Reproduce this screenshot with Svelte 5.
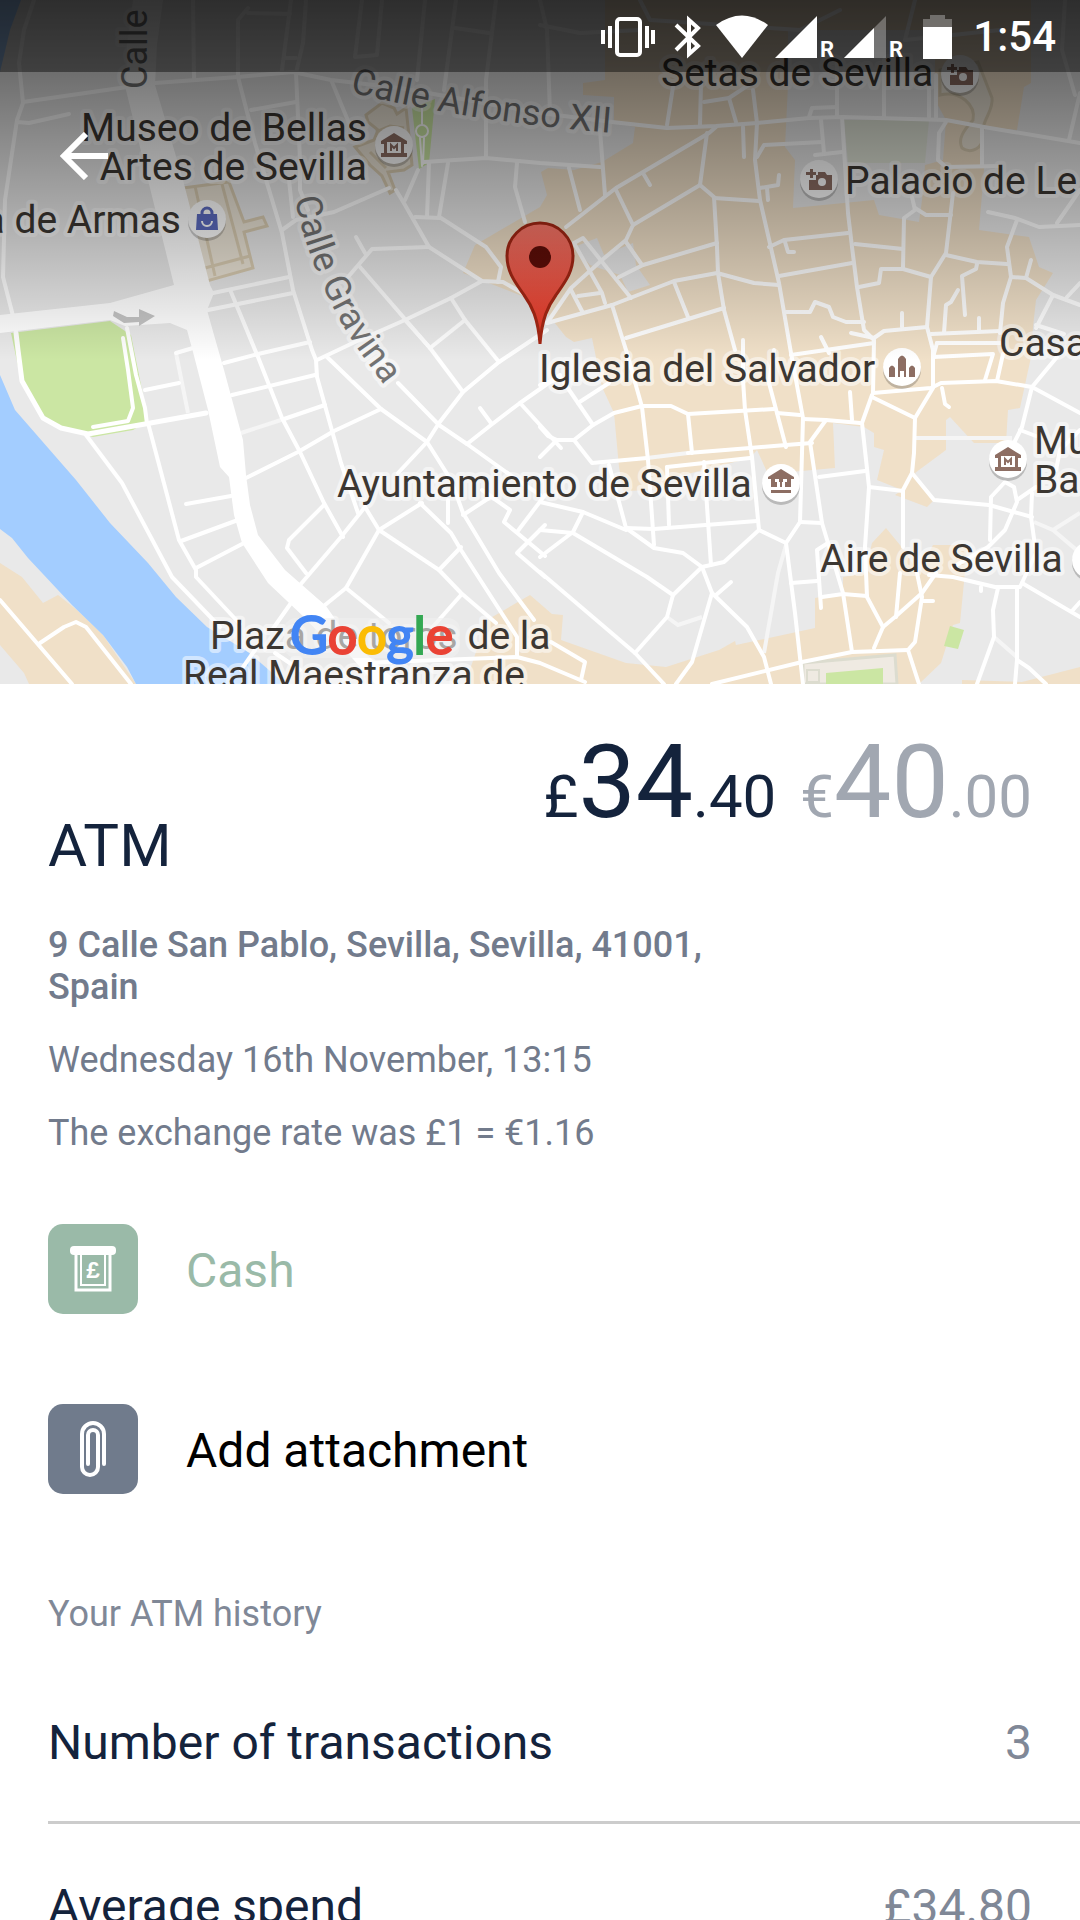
<script lang="ts">
  // Street lines on the map, as polyline points
  const streets: string[] = [
    '34,0 24,30 19,63 23,103 17,120 5,200 3,277 13,316',
    '23,102 127,87',
    '155,83 196,80 238,77 293,72 331,80 400,88 540,113 612,122 667,128 716,126 757,123 809,118 843,117 946,120 984,127 1080,143',
    '17,122 29,123 69,114',
    '193,0 194,78',
    '248,8 238,20 238,77 255,143 282,233 293,290 312,350 316,360 317,377 341,463 358,513',
    '248,13 290,14',
    '291,0 282,70',
    '306,0 303,43 296,73 300,160 300,190 308,210',
    '286,58 296,58',
    '289,180 293,217',
    '362,0 355,57 377,55 382,0',
    '425,0 417,80',
    '456,0 444,90',
    '496,0 486,80 486,158',
    '455,28 489,33',
    '251,110 296,102',
    '332,82 356,140',
    '389,188 334,212 296,220 282,230',
    '396,190 405,205 429,247 482,281 503,282 540,303',
    '429,247 372,249 348,277',
    '356,237 365,253',
    '418,170 405,200',
    '429,163 427,217',
    '448,163 439,217',
    '415,217 441,218 486,247 501,267 498,282',
    '424,162 486,158 540,163 600,167',
    '517,163 515,187 525,222',
    '213,293 289,277',
    '208,310 293,293',
    '231,292 258,357 282,418 300,452 324,503 343,537',
    '360,267 430,348 463,392',
    '451,298 465,320 499,362',
    '465,320 430,348',
    '405,320 430,348',
    '482,281 451,298 405,320 355,342 317,360',
    '224,363 258,354 310,342',
    '232,395 315,375',
    '284,419 325,405',
    '246,478 298,452 334,431 381,409',
    '145,390 179,383',
    '176,353 193,348',
    '186,504 231,496',
    '181,541 238,520',
    '196,568 244,543',
    '148,423 179,540 196,570 196,577 240,624',
    '86,435 122,483 172,577 220,627',
    '327,357 381,409 427,442 451,480 463,513 499,573 534,620',
    '398,383 439,425 467,444 506,472 540,495',
    '547,330 499,362 463,392 439,423 427,442 398,473',
    '560,375 520,403 491,425 467,444',
    '480,408 491,423',
    '520,403 561,448',
    '420,503 451,533 461,550 517,637 517,657',
    '448,500 448,523',
    '463,515 489,498',
    '482,490 510,510 504,522 545,556',
    '545,495 517,532',
    '545,525 517,553 545,577',
    '365,507 379,530 439,570 461,593 496,623',
    '422,503 379,530 346,588 325,605',
    '365,507 341,537 300,585',
    '324,505 289,540 287,548 306,573',
    '439,570 461,547',
    '461,595 430,630',
    '346,588 389,623',
    '300,587 324,607 331,630',
    '291,603 272,630',
    '255,650 241,670',
    '275,653 300,670',
    '362,663 517,657 540,663 585,682',
    '551,642 585,662 581,680',
    '0,600 72,684',
    '40,643 64,627 76,622 86,627 131,684',
    '547,323 571,288 602,260 626,240 633,225 616,190',
    '566,227 616,188 709,133 716,127',
    '569,168 580,210',
    '600,130 605,195',
    '633,225 700,185 714,197 717,247 718,273 724,310 735,350',
    '707,133 700,185',
    '714,198 759,201',
    '753,90 757,123 755,160 760,200 779,283 791,353 803,418 800,522 786,543',
    '626,242 642,265',
    '717,243 643,265 619,277',
    '574,243 583,238 631,298',
    '574,243 602,293 605,303',
    '571,290 583,313',
    '578,296 600,293',
    '547,323 612,305 674,281 717,273 754,283 779,285',
    '674,282 688,317',
    '626,338 724,308',
    '612,305 626,350 642,407 648,460 654,545',
    '769,247 784,240 848,233',
    '785,242 788,252 794,252',
    '779,276 852,263',
    '842,117 848,213 852,247 857,287 864,330 874,340 873,393',
    '855,244 903,249',
    '859,287 879,283 881,269 903,269 931,277',
    '903,268 904,218 915,210 912,197',
    '915,208 926,215 951,215',
    '953,193 946,253 931,277 927,327 933,350 933,388 915,418',
    '946,255 977,262 1007,264',
    '977,264 976,269 962,276 965,315',
    '958,290 951,302 946,305 944,333',
    '1017,220 1007,247 1011,277 1003,303 1000,333',
    '988,212 1015,218 1039,227 1080,225',
    '1011,277 1026,278 1053,295 1080,305',
    '1031,260 1026,278',
    '1053,295 1036,328',
    '1067,297 1080,283',
    '1036,325 1064,334',
    '786,312 810,312 815,302 829,307 833,317 846,322 864,322',
    '851,333 874,338 884,331 927,327',
    '902,313 902,327',
    '979,318 979,330',
    '931,334 1000,331',
    '937,343 1000,343',
    '937,343 933,357 993,354 985,380',
    '1003,354 997,381',
    '821,337 829,353',
    '673,87 667,125',
    '701,83 700,125',
    '704,102 729,98 750,84',
    '729,98 736,122',
    '743,127 744,157',
    '757,157 764,145 822,142',
    '821,120 824,153',
    '815,155 842,152',
    '809,117 812,108 837,107',
    '837,60 837,117',
    '884,60 884,117',
    '929,80 929,117',
    '936,75 936,117',
    '760,188 778,185 779,175',
    '767,188 768,200',
    '643,173 650,185',
    '946,122 939,133 938,160 946,167 1000,166',
    '982,127 982,165',
    '1080,93 1069,140',
    '1080,190 1057,223',
    '540,0 547,30 550,113',
    '540,25 580,33 640,30',
    '640,0 650,20 800,30 840,10',
    '915,0 905,40 1000,30',
    '1065,0 1062,50 1075,95',
    '540,457 557,440 574,440 593,425 614,413 642,406 671,406 688,414 774,409',
    '540,427 548,436 557,440',
    '574,440 592,463 647,458',
    '688,453 750,448 786,445 812,443',
    '688,414 692,453',
    '540,385 561,378 593,425',
    '578,403 609,383',
    '743,340 743,380 745,410 752,457 759,530 786,543 795,613 803,684',
    '759,530 724,562 702,567',
    '667,467 750,458',
    '609,465 626,528 654,548 683,553 702,567 712,593 747,627 764,657 771,684',
    '540,502 583,512 626,530',
    '583,512 573,532 540,557',
    '540,530 573,533 647,577 673,595',
    '702,567 673,595 667,617 635,653',
    '540,572 635,653 664,684',
    '712,593 692,662 676,684',
    '716,595 731,582',
    '626,528 654,529 757,521',
    '667,467 669,525',
    '704,462 711,565',
    '774,350 769,383 786,447',
    '777,413 800,415',
    '803,419 826,420 860,423',
    '826,420 810,442 822,523 843,593 852,652',
    '800,522 822,523',
    '873,393 931,388 941,383 996,381 1032,387 1080,413',
    '872,395 862,423 869,487 865,547 867,597 883,627',
    '872,397 915,418 914,453 912,473 903,490 903,547',
    '819,477 865,471',
    '869,487 903,491',
    '912,473 934,500 989,505 1032,517',
    '1057,357 1032,387 1022,427 1012,447',
    '1020,430 1036,436',
    '1005,482 991,497 990,540',
    '1005,482 1014,487 1017,502 1005,530 988,547 953,567',
    '1017,500 1036,487',
    '1032,493 1031,517 1036,553 1020,587',
    '929,575 953,577 995,587 1019,587',
    '1022,583 1080,617',
    '1072,611 1080,602',
    '1017,587 1017,660 1015,684',
    '1017,660 1029,668 1046,684',
    '998,588 993,610 994,637 977,684',
    '981,587 981,591',
    '936,573 922,593 895,617 883,627 874,648',
    '917,573 922,597 915,642 908,650 919,684',
    '922,601 933,601',
    '712,684 802,662 852,652 908,650',
    '822,597 843,594 867,596',
    '828,543 817,550 821,608',
    '791,583 817,581',
    '900,573 896,617',
    '850,392 852,420',
    '791,355 874,343',
    '942,388 945,404 949,407',
    '1080,430 1060,450 1056,470'
  ];

  const footpaths: string[] = [
    '176,353 188,413',
    '241,433 284,419',
    '647,458 688,453',
    '915,438 1012,438',
    '1034,522 1053,530 1080,513',
    '1053,530 1080,553',
    '994,637 1018,658',
    '786,545 778,573 764,653',
    '667,617 678,625 702,617'
  ];

  type Place = { name: string; x: number; y: number; end?: boolean };

  const places: Place[] = [
    { name: 'Museo de Bellas', x: 367, y: 141, end: true },
    { name: 'Artes de Sevilla', x: 367, y: 180, end: true },
    { name: 'a de Armas', x: 181, y: 233, end: true },
    { name: 'Setas de Sevilla', x: 661, y: 86 },
    { name: 'Palacio de Le', x: 845, y: 194 },
    { name: 'Iglesia del Salvador', x: 539, y: 382 },
    { name: 'Ayuntamiento de Sevilla', x: 337, y: 497 },
    { name: 'Aire de Sevilla', x: 820, y: 572 },
    { name: 'Casa', x: 999, y: 356 },
    { name: 'Mu', x: 1034, y: 454 },
    { name: 'Ba', x: 1034, y: 493 },
    { name: 'Plaza de toros de la', x: 210, y: 649 },
    { name: 'Real Maestranza de', x: 183, y: 688 }
  ];

  const pois = [
    { kind: 'museum', x: 394, y: 145 },
    { kind: 'shop', x: 207, y: 219 },
    { kind: 'camera', x: 960, y: 74 },
    { kind: 'camera', x: 819, y: 179 },
    { kind: 'church', x: 902, y: 367 },
    { kind: 'hall', x: 781, y: 483 },
    { kind: 'museum', x: 1008, y: 459 },
    { kind: 'none', x: 1091, y: 560 }
  ];

  const history = [
    { label: 'Number of transactions', value: '3' },
    { label: 'Average spend', value: '£34.80' }
  ];
</script>

<div class="screen">
  <section class="map">
    <svg class="map-canvas" viewBox="0 0 1080 684" preserveAspectRatio="xMidYMid slice" role="img" aria-label="Map of Sevilla">
      <defs>
        <linearGradient id="scrim" x1="0" y1="0" x2="0" y2="1">
          <stop offset="0" stop-color="#000" stop-opacity="0.66" />
          <stop offset="1" stop-color="#000" stop-opacity="0" />
        </linearGradient>
        <linearGradient id="pin" x1="0" y1="0" x2="0" y2="1">
          <stop offset="0" stop-color="#ff7a6c" />
          <stop offset="1" stop-color="#e0301e" />
        </linearGradient>
        <path id="gravina" d="M295 198 C302 236 314 268 332 305 S368 362 394 399" />
        <path id="alfonso" d="M350 92 Q470 122 625 134" />
      </defs>

      <rect width="1080" height="684" fill="#e9e9e9" />

      <!-- built-up areas -->
      <g fill="#f0e0c8">
        <path d="M605 0V80L583 83V95L614 97V122L635 127L633 143L602 162L574 170L548 168L541 172L547 195L540 207L475 245L463 273L540 303L554 322L566 337L574 342L592 338L602 387L614 413L619 467L623 491L660 490L672 478L750 458L757 450L768 474L835 468L833 423L864 427L874 433V447L884 450L877 480L902 490L895 495L927 507L934 500L919 480L915 473L946 450V420L950 417L974 443L1006 443L1008 410L1020 408L1031 357L1033 327L1036 300L1053 273L1039 267L1029 237L979 230L984 170V127L1017 130L1024 87L1031 83V0Z" />
        <path d="M487 620L530 595L552 614L563 615L561 640L626 663L666 667L719 650L735 641L736 645L815 628V598L843 593V577L865 573L872 543L886 528L900 545L919 573L933 545H967L964 582L960 623L953 625L941 663L919 684H465Z" />
        <path d="M962 680L1022 682L1080 667V684H962Z" />
        <path d="M0 563L22 577L43 603L58 595L77 610L103 635L136 684H29L24 673L0 645Z" />
      </g>
      <g fill="#e9e9e9">
        <path d="M788 30V85L785 147L795 160L793 208L874 200L879 215L919 222L922 200L925 165L943 160L946 120L935 100V30Z" />
        <path d="M574 247L597 238L604 255L633 243L636 265L650 285L628 292L620 275L590 265Z" />
      </g>
      <path d="M844 120H929L925 163H848Z" fill="#dfe3d6" />

      <!-- river -->
      <g fill="#a3cdff">
        <path d="M0 0H21L10 30L0 72Z" />
        <path d="M0 375L15 410L76 480L110 523L148 563L176 597L207 627L248 652L262 664L285 684H136L127 667L103 635L72 605L28 558L12 538L0 529Z" />
      </g>

      <!-- parks -->
      <g fill="#cbe6a3">
        <path d="M11 333L110 321L131 335L138 370L146 410L145 423L133 430L93 437L62 428L45 418L21 380Z" />
        <path d="M412 108L435 99L429 163L419 169Z" />
        <path d="M950 626L964 630L958 649L944 646Z" />
      </g>

      <!-- landmark buildings -->
      <g fill="#ebe4d6" stroke="#d9ccb2" stroke-width="3">
        <path d="M183 188L229 182L244 222L263 217L267 226L244 232L253 268L207 281L195 240Z" />
        <path d="M195 186L215 276M222 184L243 264M205 268L250 256" fill="none" />
        <path d="M366 115L382 103L394 108L397 114L406 108L410 145L412 165L404 170L388 172L395 190L390 193L382 176L370 165L355 147L366 143L374 140L378 130L368 122Z" />
        <path d="M370 152L386 168M376 132L390 126L404 128" fill="none" />
        <path d="M940 95C960 90 976 105 973 120C962 132 958 140 962 148A13 13 0 0 0 982 142C980 120 994 112 992 98L978 62L940 70Z" />
      </g>
      <path d="M803 663L895 655L897 684H803Z" fill="#efeae2" stroke="#dcdccf" stroke-width="3" />
      <path d="M826 673L883 668V684H826Z" fill="#cbe6a3" />
      <rect x="807" y="670" width="12" height="12" fill="none" stroke="#dcdccf" stroke-width="2" />

      <!-- streets -->
      <g fill="none" stroke="#f5f5f5" stroke-width="4">
        {#each footpaths as points}
          <polyline {points} />
        {/each}
      </g>
      <g fill="none" stroke="#fff" stroke-width="4" stroke-linecap="round" stroke-linejoin="round">
        {#each streets as points}
          <polyline {points} />
        {/each}
        <path d="M16 333L18 350L22 381L43 418L61 428L88 434L145 424L206 413" stroke-width="5" />
        <path d="M123 338L128 370L133 408L128 421L93 427" />
        <path d="M127 328L136 375L145 408L147 424" />
        <path d="M422 108V124M420 138L422 166M424 138L423 164" stroke-width="2" />
        <circle cx="422" cy="131" r="6" stroke-width="2" />
      </g>
      <path
        fill="#fff"
        d="M133 0L127 45L126 90L148 180L174 285L110 303L0 315V333L110 320L125 326L170 323L187 330L193 352L208 410L220 467L229 477L234 515L242 543L268 583L305 618L320 634L345 650L375 684L400 684L350 640L326 606L285 570L258 535L250 505L246 475L243 440L224 370L214 335L207 310L214 293L210 285L183 180L155 85L157 45L163 0Z"
      />
      <path d="M114 311L127 317H139V309L155 316L139 326V322L124 323L113 316Z" fill="#c4c4c4" />

      <!-- street names -->
      <g class="street-name">
        <text transform="translate(147 89) rotate(-90)">Calle</text>
        <text><textPath href="#alfonso">Calle Alfonso XII</textPath></text>
        <text><textPath href="#gravina">Calle Gravina</textPath></text>
      </g>

      <!-- places -->
      <g class="place-name">
        {#each places as place}
          <text x={place.x} y={place.y} text-anchor={place.end ? 'end' : 'start'}>{place.name}</text>
        {/each}
      </g>

      {#each pois as poi}
        <g transform="translate({poi.x} {poi.y})">
          <circle cy="3" r="19" fill="#000" fill-opacity="0.2" />
          <circle r="19" fill="#fff" />
          {#if poi.kind === 'museum'}
            <path d="M0 -12L13 -4V-1H10V8H13V12H-13V8H-10V-1H-13V-4ZM-7 -3V8H7V-3Z" fill="#8d6e63" fill-rule="evenodd" />
            <path d="M-3 6V0L0 3L3 0V6" fill="none" stroke="#8d6e63" stroke-width="2" />
          {:else if poi.kind === 'hall'}
            <path d="M0 -14L13 -6V-4H-13V-6Z" fill="#8d6e63" />
            <path d="M-10 -4H-6V-1H-4V4H-10ZM10 -4H6V-1H4V4H10ZM-1 -1H1V4H-1ZM-2 -4H2V-1H-2ZM-10 7H10V10H-10Z" fill="#8d6e63" />
          {:else if poi.kind === 'church'}
            <path d="M-13 10V1Q-10 -4 -7 1V10ZM7 10V1Q10 -4 13 1V10ZM-4 10V-8Q0 -15 4 -8V10H2V4H-2V10Z" fill="#8d6e63" />
          {:else if poi.kind === 'camera'}
            <path d="M-9 -10H-6V-7H-3V-4H-6V-1H-9V-4H-13V-7H-9ZM-1 -7H6L8 -4H13V11H-10V1H-3V-4H-1Z" fill="#8d6e63" />
            <circle cx="3" cy="3" r="4" fill="#fff" />
          {:else if poi.kind === 'shop'}
            <path d="M-10 -5H10L11 11H-11Z" fill="#5c6bc0" />
            <path d="M-5 -4V-6A5 5 0 0 1 5 -6V-4" fill="none" stroke="#5c6bc0" stroke-width="3" />
            <path d="M-5 2A5 5 0 0 0 5 2" fill="none" stroke="#fff" stroke-width="2" />
          {/if}
        </g>
      {/each}

      <path
        d="M540 344C538 318 532 306 524 295C515 282 507 272 507 256A33 33 0 0 1 573 256C573 272 565 282 556 295C548 306 542 318 540 344Z"
        fill="url(#pin)"
        stroke="#a52714"
        stroke-width="3"
      />
      <circle cx="540" cy="257" r="11" fill="#5f0e08" />

      <rect x="284" y="618" width="176" height="40" rx="12" fill="#f0f0f0" fill-opacity="0.6" />
      <text class="google" x="290" y="654" aria-label="Google"
        ><tspan class="blue">G</tspan><tspan class="red">o</tspan><tspan class="yellow">o</tspan><tspan class="blue"
          >g</tspan
        ><tspan class="green">l</tspan><tspan class="red">e</tspan></text
      >

      <rect width="1080" height="360" fill="url(#scrim)" />
    </svg>

    <div class="status-bar">
      <svg width="67" height="44" viewBox="0 0 67 44" fill="#fff">
        <rect x="17" y="4" width="23" height="36" rx="3" fill="none" stroke="#fff" stroke-width="4" />
        <path d="M1 15h4v14H1zM8 11h4v22H8zM45 11h4v22h-4zM51 15h4v14h-4z" />
      </svg>
      <svg width="40" height="44" viewBox="0 0 40 44" fill="none" stroke="#fff" stroke-width="4">
        <path d="M5 10L27 31L18 39V5L27 13L5 35" />
      </svg>
      <svg width="54" height="44" viewBox="0 0 54 44" fill="#fff">
        <path d="M1 10Q27 -9 53 10L27 43Z" />
      </svg>
      <svg width="65" height="44" viewBox="0 0 65 44" fill="#fff">
        <path d="M2 43H44V1Z" />
        <text class="roaming" x="47" y="42">R</text>
      </svg>
      <svg width="65" height="44" viewBox="0 0 65 44" fill="#fff">
        <path d="M2 43H44V1Z" fill-opacity="0.3" />
        <path d="M2 43H32V13Z" />
        <text class="roaming" x="47" y="42">R</text>
      </svg>
      <svg width="58" height="44" viewBox="0 0 58 44" fill="#fff">
        <path d="M19 0H34V4H41V12H12V4H19Z" fill-opacity="0.3" />
        <path d="M12 12H41V44H12Z" />
      </svg>
      <time>1:54</time>
    </div>

    <button class="back" aria-label="Back">
      <svg width="48" height="48" viewBox="0 0 48 48" fill="none" stroke="#fff" stroke-width="6">
        <path d="M48 24H5M26 2L4 24L26 46" />
      </svg>
    </button>
  </section>

  <main>
    <header>
      <h1>ATM</h1>
      <p class="amounts">
        <span class="local">£<b>34</b>.40</span>
        <span class="foreign">€<b>40</b>.00</span>
      </p>
    </header>

    <div class="details">
      <address>9 Calle San Pablo, Sevilla, Sevilla, 41001, Spain</address>
      <p>Wednesday 16th November, 13:15</p>
      <p>The exchange rate was £1 = €1.16</p>
    </div>

    <div class="actions">
      <button class="action category">
        <svg class="tile" viewBox="0 0 90 90" fill="none" stroke="#fff">
          <rect x="22" y="22" width="46" height="9" rx="4" fill="#fff" stroke="none" />
          <path d="M28 27V66H62V27" stroke-width="3" />
          <path d="M33 27V61H57V27" stroke-width="2" />
          <text class="pound" x="45" y="54">£</text>
        </svg>
        <span>Cash</span>
      </button>
      <button class="action attachment">
        <svg class="tile" viewBox="0 0 90 90" fill="none" stroke="#fff" stroke-width="4" stroke-linecap="round">
          <path d="M56 60V30A11 11 0 0 0 34 30V63A8 8 0 0 0 50 63V31A5 5 0 0 0 40 31V60" />
        </svg>
        <span>Add attachment</span>
      </button>
    </div>

    <h2>Your ATM history</h2>
    <dl>
      {#each history as row}
        <div class="row">
          <dt>{row.label}</dt>
          <dd>{row.value}</dd>
        </div>
      {/each}
    </dl>
  </main>
</div>

<style>
  :global(body) {
    background: #fff;
  }

  .screen {
    height: 100vh;
    overflow-y: auto;
    scrollbar-width: none;
    font-family: Roboto, 'Liberation Sans', sans-serif;
    color: #14233c;
    background: #fff;
  }

  h1,
  h2,
  p,
  dl,
  dd {
    margin: 0;
    font-weight: 400;
  }

  /* Map */
  .map {
    position: relative;
    height: 684px;
    overflow: hidden;
  }

  .map-canvas {
    display: block;
    width: 100%;
    height: 100%;
  }

  .place-name,
  .street-name {
    paint-order: stroke;
    stroke: rgba(255, 255, 255, 0.5);
    stroke-width: 8px;
    stroke-linejoin: round;
  }

  .place-name {
    font-size: 39px;
    fill: #3c3732;
  }

  .street-name {
    font-size: 36px;
    fill: #737373;
  }

  .google {
    font-family: Lato, Roboto, sans-serif;
    font-size: 52px;
    font-weight: 400;
    stroke-width: 2px;
  }

  .blue {
    fill: #4285f4;
    stroke: #4285f4;
  }

  .red {
    fill: #ea4335;
    stroke: #ea4335;
  }

  .yellow {
    fill: #fbbc05;
    stroke: #fbbc05;
  }

  .green {
    fill: #34a853;
    stroke: #34a853;
  }

  .status-bar {
    position: absolute;
    top: 0;
    left: 0;
    right: 0;
    display: flex;
    justify-content: flex-end;
    align-items: center;
    gap: 4px;
    height: 72px;
    padding: 2px 24px 0 0;
    box-sizing: border-box;
    background: rgba(0, 0, 0, 0.42);
    color: #fff;
  }

  .status-bar time {
    font-size: 42px;
    font-weight: 500;
    line-height: 48px;
  }

  .roaming {
    font-size: 22px;
    font-weight: 700;
  }

  .back {
    position: absolute;
    top: 132px;
    left: 60px;
    padding: 0;
    border: none;
    background: none;
    line-height: 0;
    cursor: pointer;
  }

  /* Transaction */
  main {
    padding: 46px 0 0 48px;
  }

  header {
    display: flex;
    justify-content: space-between;
    align-items: flex-start;
    padding-right: 48px;
  }

  h1 {
    padding-top: 80px;
    font-size: 60px;
    line-height: 72px;
  }

  .amounts {
    display: flex;
    gap: 24px;
    font-size: 60px;
    line-height: 60px;
  }

  .amounts b {
    font-size: 102px;
    font-weight: 400;
    line-height: 104px;
  }

  .foreign {
    color: #a1a7b1;
  }

  .details {
    display: flex;
    flex-direction: column;
    gap: 31px;
    max-width: 720px;
    margin-top: 42px;
    font-size: 36px;
    line-height: 42px;
    color: #727b8c;
  }

  address {
    font-style: normal;
    font-weight: 500;
  }

  .actions {
    display: flex;
    flex-direction: column;
    gap: 90px;
    margin-top: 70px;
  }

  .action {
    display: flex;
    align-items: center;
    gap: 48px;
    padding: 0;
    border: none;
    background: none;
    font-family: inherit;
    font-size: 48px;
    line-height: 60px;
    color: #000;
    text-align: left;
    cursor: pointer;
  }

  .action span {
    padding-top: 3px;
  }

  .tile {
    width: 90px;
    height: 90px;
    border-radius: 15px;
    background: #707b8c;
  }

  .category {
    color: #9abaa8;
  }

  .category .tile {
    background: #9abaa8;
  }

  .pound {
    font-family: 'Liberation Mono', monospace;
    font-size: 24px;
    font-weight: 700;
    text-anchor: middle;
    fill: #fff;
    stroke: none;
  }

  h2 {
    margin: 99px 0 25px;
    font-size: 36px;
    line-height: 42px;
    color: #808897;
  }

  .row {
    display: flex;
    justify-content: space-between;
    padding: 53px 48px 48px 0;
    border-bottom: 3px solid #ccc;
    font-size: 48px;
    line-height: 60px;
  }

  .row dd {
    color: #808897;
  }
</style>
